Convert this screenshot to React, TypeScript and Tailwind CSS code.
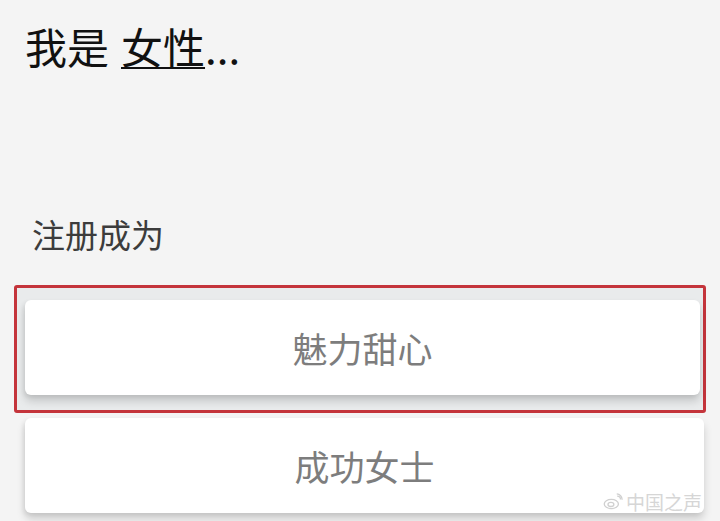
import React from 'react';

const options = [
  { label: '魅力甜心', selected: true },
  { label: '成功女士', selected: false },
];

const WeiboMark: React.FC = () => (
  <svg width="20" height="17" viewBox="0 0 24 20" fill="none" stroke="#d0d0d0" strokeWidth="1.6">
    <ellipse cx="10" cy="13" rx="8.5" ry="5.5" />
    <ellipse cx="9.5" cy="13.5" rx="3.5" ry="2.5" />
    <path d="M17 3.5a4 4 0 0 1 4 4" />
    <path d="M16.5 0.8a7 7 0 0 1 6.5 7" />
  </svg>
);

const OptionCard: React.FC<{ label: string; children?: React.ReactNode }> = ({ label, children }) => (
  <div className="relative h-[95px] bg-white rounded-[6px] shadow-[0_6px_8px_rgba(0,0,0,0.16),-2px_2px_4px_rgba(0,0,0,0.06)] flex items-center justify-center">
    <span className="text-[35px] leading-none text-[#7d7d7d]">{label}</span>
    {children}
  </div>
);

export default function App() {
  return (
    <div
      className="w-[720px] h-[521px] overflow-hidden bg-[#f4f4f4] flex flex-col"
      style={{ fontFamily: '"Noto Sans CJK SC", "Noto Sans", sans-serif' }}
    >
      <h1 className="pt-[20px] pl-[25px] h-[72px] text-[42px] leading-[52px] text-[#111] font-normal">
        我是
        <span className="ml-[12px] underline decoration-[2px] underline-offset-[3px]">女性</span>
        ...
      </h1>

      <p className="mt-[142px] pl-[32px] h-[40px] text-[33px] leading-[40px] text-[#3c3c3c]">注册成为</p>

      <div className="mt-[31px] mx-[14px] h-[128px] border-[3px] border-[#c4343b] rounded-[3px] bg-[#e9ebec] pt-[12px] pl-[8px] pr-[3px]">
        <OptionCard label={options[0].label} />
      </div>

      <div className="mt-[5px] ml-[25px] mr-[16px]">
        <OptionCard label={options[1].label}>
          <div className="absolute right-[2px] bottom-[2px] flex items-center gap-[3px] text-[19px] leading-none text-[#d6d6d6]">
            <WeiboMark />
            <span>中国之声</span>
          </div>
        </OptionCard>
      </div>
    </div>
  );
}
